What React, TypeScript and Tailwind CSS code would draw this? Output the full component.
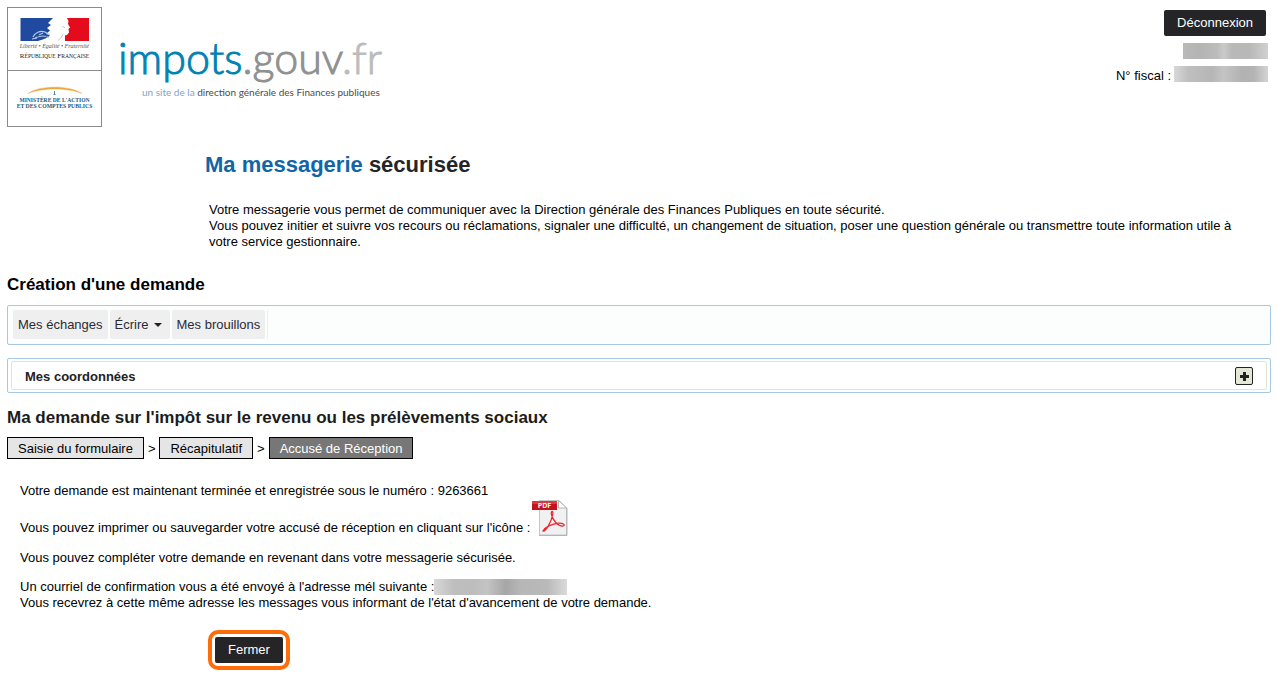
import React from "react";

function RepublicLogo() {
  return (
    <svg viewBox="0 0 95 121" className="h-[121px] w-[95px] shrink-0" role="img" aria-label="République Française">
      <rect x="0.5" y="0.5" width="94" height="119" fill="#fff" stroke="#8a8a8a" />
      <path d="M0 63.5H95" stroke="#8a8a8a" />
      <rect x="13.500" y="11" width="36" height="23" fill="#1f4aa0" />
      <rect x="56" y="11" width="26" height="23" fill="#e30b1c" />
      <path d="M46 11H60L61.500 14L61 17L63 20.500L61.500 22L62 25.500L60 28L58 28.500L58 34H31C37 32 41 31 43 28L39 27L43 23.500L40 21L44 18L41 16Z" fill="#fff" />
      <path d="M26 30C28 26 33 23 38 25L43 28M28 31C34 28 38 28 42 31M32 28L36 26M25 32L30 31" fill="none" stroke="#b8cbe8" strokeWidth="1.200" />
      <path d="M30 30C34 27 37 28 40 29.500" fill="none" stroke="#1f4aa0" strokeWidth="0.800" />
      <path d="M55.500 19.500L58 20.500M56 27C55 30 53 32 51 33.500" fill="none" stroke="#aaa" strokeWidth="0.700" />
      <text x="47.500" y="41" textAnchor="middle" fontFamily="Liberation Serif, serif" fontStyle="italic" fontSize="6" fill="#555">Liberté • Égalité • Fraternité</text>
      <text x="47.500" y="50.500" textAnchor="middle" fontFamily="Liberation Serif, serif" fontSize="7" fill="#222">
        R<tspan fontSize="5.600">ÉPUBLIQUE</tspan> F<tspan fontSize="5.600">RANÇAISE</tspan>
      </text>
      <path d="M21 86.500C32 78 63 78 75 86.500C61 80.500 35 80.500 21 86.500Z" fill="#e8a93a" stroke="#e8a93a" strokeWidth="0.400" />
      <path d="M47.500 84V88M46.500 87.500H48.500" stroke="#4b8fa0" strokeWidth="1" />
      <text x="47.500" y="95" textAnchor="middle" fontFamily="Liberation Serif, serif" fontWeight="bold" fontSize="5.600" fill="#1d5878">MINISTÈRE DE L'ACTION</text>
      <text x="47.500" y="101" textAnchor="middle" fontFamily="Liberation Serif, serif" fontWeight="bold" fontSize="5.700" fill="#1d5878">ET DES COMPTES PUBLICS</text>
    </svg>
  );
}

function PdfIcon() {
  return (
    <svg viewBox="0 0 36 37" className="h-[37px] w-9" aria-hidden="true">
      <path d="M7.500 1.500H27L34.500 9V36H7.500Z" fill="#f1f1f1" stroke="#c4c4c4" />
      <path d="M7 36.500H35V9" fill="none" stroke="#a8a8a8" strokeWidth="0.800" />
      <path d="M26.500 1.500V9H34.500Z" fill="#fff" stroke="#a5a5a5" strokeWidth="0.800" />
      <rect x="0" y="2" width="25" height="9" fill="#c4141b" />
      <rect x="0" y="2" width="25" height="3" fill="#d93a3c" />
      <text x="12.500" y="9" textAnchor="middle" fontFamily="Open Sans, sans-serif" fontWeight="bold" fontSize="7" fill="#fff">PDF</text>
      <path d="M11 32C13 33 19.500 24 21 14C21 11.500 19 12 19.300 15C20.500 21 26 27.500 31 27C34 26 31 23.500 25 24.300C20 25 13 28 11 32Z" fill="none" stroke="#ee2530" strokeWidth="1.300" />
    </svg>
  );
}

function Redacted({ className }: { className: string }) {
  return <span aria-hidden="true" className={`inline-block h-4 ${className}`} />;
}

const darkButton = "h-[26px] rounded-xs bg-[#252527] px-[13px] text-white";
const menuItem = "flex h-[29px] items-center rounded-xs bg-[#efefef] px-[5px] text-[#2b2b33]";
const step = "flex h-[22px] items-center border border-black px-[10px] pt-px";

export default function App() {
  return (
    <div className="bg-white px-[7px] pb-[26px] font-['Liberation_Sans',Arial,sans-serif] text-[13px] leading-4 text-black">
      <header className="flex h-32 items-start justify-between pt-[7px]">
        <div className="flex gap-4">
          <RepublicLogo />
          <a href="#accueil" className="flex flex-col pt-[23px] font-['Lato','Open_Sans',sans-serif]">
            <span className="text-[43px] leading-[56px] font-light whitespace-nowrap text-[#8f9092] [-webkit-text-stroke:1px_currentColor]">
              <span className="text-[#0083b3]">impots</span>.gouv<span className="text-[#bcbcbc]">.fr</span>
            </span>
            <span className="pl-6 text-[10px] leading-3 whitespace-nowrap text-[#4c4c4c]">
              <span className="text-[#7ea6c3]">un site de la</span> direction générale des Finances publiques
            </span>
          </a>
        </div>
        <div className="flex flex-col items-end pt-[3px] pr-[3px]">
          <button type="button" className={`mr-[2px] ${darkButton}`}>Déconnexion</button>
          <Redacted className="mt-[7px] w-[85px] bg-[linear-gradient(90deg,#b9b9ba,#b4b4b5_20%,#bdbcbd_40%,#cbcacb_48%,#b9b8b9_58%,#b9b8b9_78%,#d0d0d0)]" />
          <div className="mt-[7px] flex gap-[3px]">
            <span className="pt-[2px]">N° fiscal :</span>
            <Redacted className="w-[94px] bg-[linear-gradient(90deg,#d8d8d8,#bfbfbf_15%,#b6b6b6_40%,#c4c4c4_53%,#b2b2b2_72%,#b4b4b4_85%,#d4d4d4)]" />
          </div>
        </div>
      </header>

      <main>
        <h1 className="mt-[23px] ml-[198px] text-[22px] leading-7 font-bold text-[#252529]">
          <span className="text-[#1266a7]">Ma messagerie</span> sécurisée
        </h1>
        <p className="mt-[23px] mr-[34px] ml-[202px]">
          Votre messagerie vous permet de communiquer avec la Direction générale des Finances Publiques en toute sécurité.
          <br />
          Vous pouvez initier et suivre vos recours ou réclamations, signaler une difficulté, un changement de situation,
          poser une question générale ou transmettre toute information utile à votre service gestionnaire.
        </p>

        <h2 className="mt-[25px] text-[17px] leading-5 font-bold">Création d'une demande</h2>
        <nav className="mt-[10px] flex h-10 items-start gap-[2px] rounded-xs border border-[#a6c9e2] bg-[#fcfdfd] py-1 pl-[5px]">
          <a href="#echanges" className={menuItem}>Mes échanges</a>
          <button type="button" className={`gap-[5px] ${menuItem}`}>
            Écrire
            <svg viewBox="0 0 8 4" className="mr-[3px] h-1 w-2" aria-hidden="true"><path d="M0 0H8L4 4Z" fill="#222" /></svg>
          </button>
          <a href="#brouillons" className={menuItem}>Mes brouillons</a>
          <span className="h-[29px] border-r border-[#efefef]" />
        </nav>

        <section className="mt-[13px] rounded-xs border border-[#a6c9e2] px-[3px] py-[2px]">
          <div className="flex h-[29px] items-center justify-between rounded-xs border border-[#e2e4d4] px-[13px]">
            <h3 className="pt-[2px] font-bold text-[#222]">Mes coordonnées</h3>
            <button type="button" aria-label="Afficher mes coordonnées" className="flex size-[18px] items-center justify-center rounded-xs border border-[#222] bg-[#e4e6d6]">
              <svg viewBox="0 0 10 10" className="size-[10px]" aria-hidden="true"><path d="M4 1H7V4H10V7H7V10H4V7H1V4H4Z" fill="#222" /></svg>
            </button>
          </div>
        </section>

        <h2 className="mt-[15px] text-[17px] leading-5 font-bold text-[#1c1c1c]">Ma demande sur l'impôt sur le revenu ou les prélèvements sociaux</h2>
        <ol className="mt-[9px] flex items-center gap-1">
          <li className={`bg-[#e5e5e5] ${step}`}>Saisie du formulaire</li>
          <li aria-hidden="true" className="pt-px">&gt;</li>
          <li className={`bg-[#e5e5e5] ${step}`}>Récapitulatif</li>
          <li aria-hidden="true" className="pt-px">&gt;</li>
          <li aria-current="step" className={`bg-[#777] text-white ${step}`}>Accusé de Réception</li>
        </ol>

        <div className="mt-6 ml-[13px]">
          <p>Votre demande est maintenant terminée et enregistrée sous le numéro : 9263661</p>
          <div className="flex items-end gap-px">
            <p>Vous pouvez imprimer ou sauvegarder votre accusé de réception en cliquant sur l'icône :</p>
            <a href="#accuse" aria-label="Accusé de réception PDF"><PdfIcon /></a>
          </div>
          <p className="mt-[14px]">Vous pouvez compléter votre demande en revenant dans votre messagerie sécurisée.</p>
          <div className="mt-[13px] flex">
            <p>Un courriel de confirmation vous a été envoyé à l'adresse mél suivante :</p>
            <Redacted className="w-[133px] bg-[linear-gradient(90deg,#d8d8d8,#bebebe_15%,#bdbdbd_30%,#c4c4c4_40%,#a6a6a6_54%,#b7b7b7_65%,#b9b9b9_85%,#dadada)]" />
          </div>
          <p>Vous recevrez à cette même adresse les messages vous informant de l'état d'avancement de votre demande.</p>
        </div>
        <div className="mt-[19px] ml-[201px] inline-block rounded-[10px] border-4 border-[#ff6c0a] p-[3px]">
          <button type="button" className={`block ${darkButton}`}>Fermer</button>
        </div>
      </main>
    </div>
  );
}
